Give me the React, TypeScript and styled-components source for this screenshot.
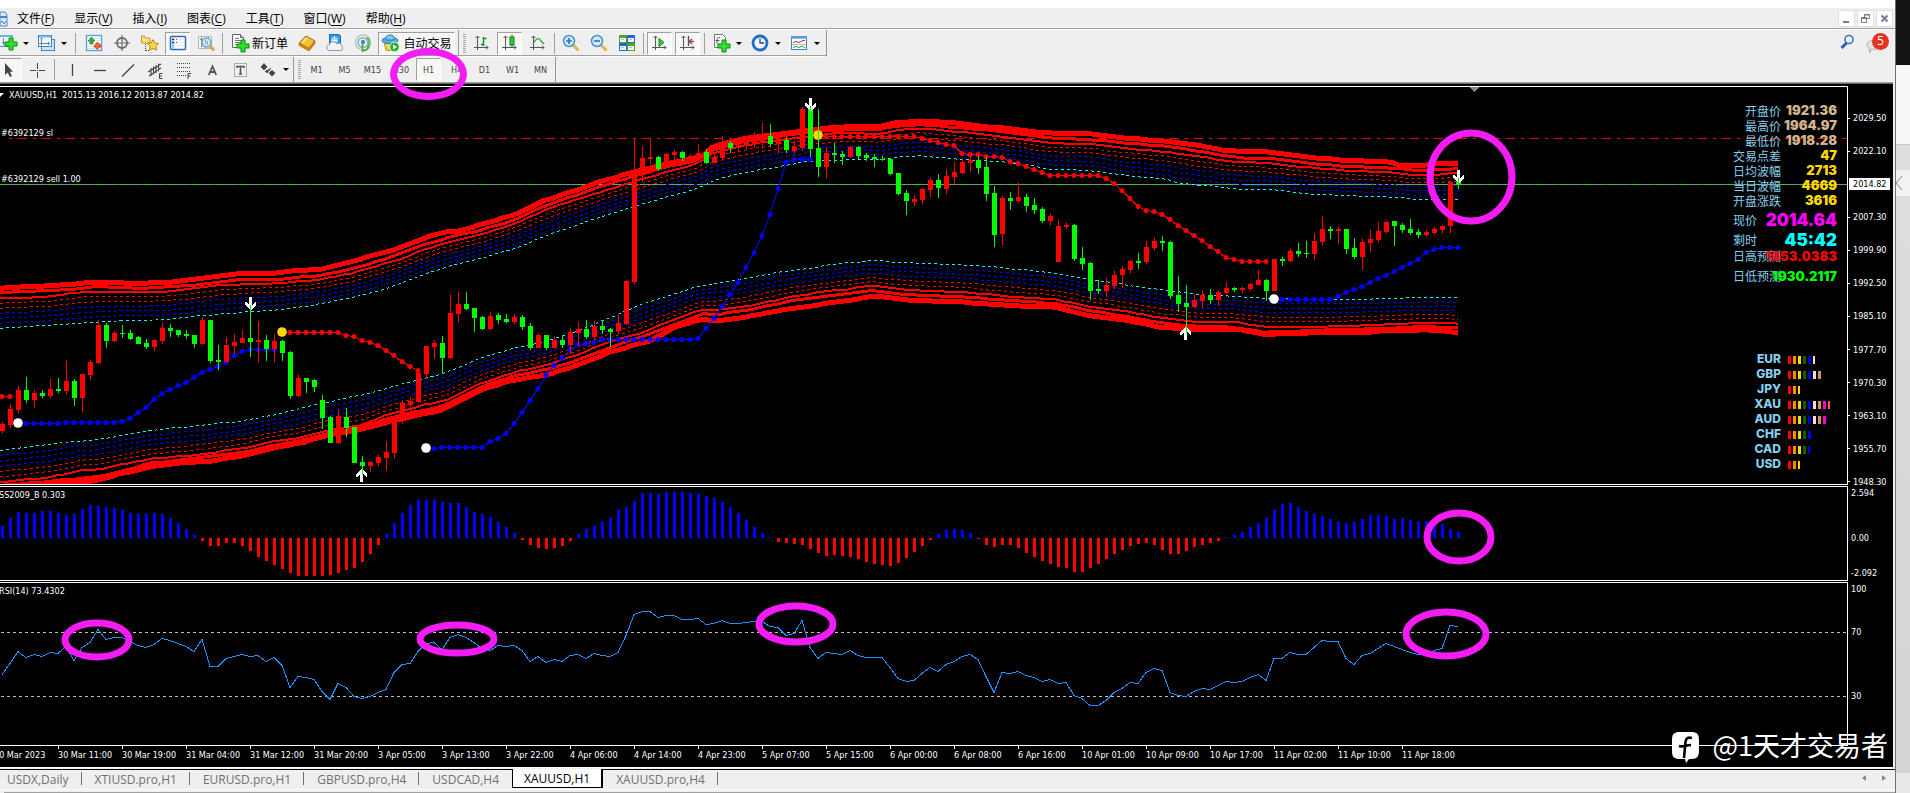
import React from 'react';
import styled, { createGlobalStyle, css } from 'styled-components';

const GlobalStyle = createGlobalStyle`
  * { box-sizing: border-box; }
  body { margin: 0; background: #efefef; overflow: hidden; }
  button { font: inherit; color: inherit; padding: 0; margin: 0; border: 0; background: none; cursor: default; }
`;

const uiFont = `'Open Sans', 'Noto Sans CJK SC', sans-serif`;
const chartFont = `'DejaVu Sans Condensed', 'DejaVu Sans', 'Noto Sans CJK SC', sans-serif`;

/* ------------------------------------------------------------------ frame */

const Screen = styled.div`
  display: flex;
  min-height: 100vh;
  font-family: ${uiFont};
  font-size: 12px;
  color: #000;
`;

const Terminal = styled.div`
  position: relative;
  flex: 1;
  min-width: 0;
  display: flex;
  flex-direction: column;
  background: #efefef;
  border-right: 1px solid #707070;
`;

const Backdrop = styled.aside`
  width: 14px;
  display: flex;
  flex-direction: column;
  background: linear-gradient(#e0e0e0, #d4d4d4);
`;
const BackdropDark = styled.div`height: 65px; background: #141414;`;
const BackdropLight = styled.div`height: 80px; background: #f8f8f8; border-bottom: 1px solid #ccc;`;
const BackdropFoot = styled.div`margin-top: auto; height: 20px; background: #e8e8e8;`;
const CollapseButton = styled.button`
  margin-top: 25px;
  height: 26px;
  background: #f2f2f2;
  text-align: left;
  svg { display: block; }
`;

const TopStrip = styled.div`height: 8px; background: #fff;`;

const MenuBar = styled.nav`
  height: 22px;
  display: flex;
  align-items: center;
  gap: 20px;
  padding-right: 2px;
  border-bottom: 1px solid #fff;
  box-shadow: inset 0 -1px 0 #a0a0a0;
`;
const MenuLogo = styled.span`width: 8px; margin-right: -11px; svg { display: block; }`;
const MenuItem = styled.button`
  font-size: 12px;
  line-height: 18px;
  white-space: nowrap;
  u { text-underline-offset: 2px; }
`;
const WindowButtons = styled.div`margin-left: auto; display: flex; gap: 2px;`;
const WindowButton = styled.button`
  width: 17px;
  height: 17px;
  background: #fff;
  border: 1px solid #e0e0e0;
  svg { display: block; }
`;

const ToolRow = styled.div`display: flex; align-items: flex-start;`;
const Corner = styled.div`
  margin-left: auto;
  display: flex;
  align-items: center;
  gap: 10px;
  height: 27px;
  padding-right: 5px;
`;
const MailButton = styled.button`display: flex; position: relative; width: 25px; height: 22px;`;
const Badge = styled.span`
  position: absolute;
  right: 1px;
  top: 0;
  width: 17px;
  height: 17px;
  border-radius: 50%;
  background: #e23420;
  color: #fff;
  font-size: 12px;
  line-height: 16px;
  text-align: center;
`;

const ToolBar = styled.div<{ $last?: boolean }>`
  display: flex;
  align-items: center;
  height: 27px;
  border-right: 1px solid #999;
  ${p => (p.$last
    ? css`padding-bottom: 2px;`
    : css`padding-right: 2px; border-bottom: 1px solid #fff; box-shadow: inset 0 -1px 0 #a0a0a0;`)}
`;

const Tool = styled.button<{ $on?: boolean; $wide?: number; $gap?: number; $bleed?: boolean }>`
  display: flex;
  align-items: center;
  justify-content: center;
  gap: ${p => p.$gap ?? 2}px;
  width: ${p => p.$wide ?? 25}px;
  height: 23px;
  margin: 0 ${p => (p.$wide ? 1 : 2)}px 0 ${p => (p.$bleed ? -4 : 1)}px;
  border: 1px solid transparent;
  white-space: nowrap;
  svg { flex: none; }
  ${p => p.$on && css`
    border-color: #a0a0a0 #fff #fff #a0a0a0;
    background: repeating-conic-gradient(#fff 0 25%, #f0f0f0 0 50%) 0 0 / 2px 2px;
  `}
`;
const Period = styled(Tool)`
  font-family: ${chartFont};
  font-size: 9px;
  color: #444;
`;
const Rule = styled.i<{ $gap?: number }>`
  width: 1px;
  height: 21px;
  margin: 0 ${p => p.$gap ?? 2}px;
  background: #a0a0a0;
`;
const Grip = styled.i`
  width: 3px;
  height: 19px;
  margin: 0 2px 0 4px;
  background: repeating-linear-gradient(#aaa 0 1px, #efefef 1px 2px);
`;
const Caret = styled.i`
  border: 3px solid transparent;
  border-top-color: #000;
  border-bottom: 0;
`;

/* ------------------------------------------------------------------ chart */

const ChartWindow = styled.main`
  flex: 1;
  display: flex;
  flex-direction: column;
  gap: 1px;
  margin-right: 2px;
  padding-top: 2px;
  background: #000;
  color: #fff;
  font-family: ${chartFont};
  font-size: 9px;
  line-height: 12px;
  box-shadow: 0 -1px 0 #696969, 0 -2px 0 #a0a0a0;
`;
const Pane = styled.section<{ $share: number }>`
  flex: ${p => p.$share} 1 0;
  min-height: 0;
  display: flex;
`;
const Plot = styled.div`
  position: relative;
  flex: 1;
  min-width: 0;
  border: 1px solid #fff;
  border-left: 0;
  overflow: hidden;
`;
const PlotSvg = styled.svg`display: block; width: 100%; height: 100%; position: absolute; inset: 0;`;
const Caption = styled.div<{ $top: string; $left?: number }>`
  position: absolute;
  top: ${p => p.$top};
  left: ${p => p.$left ?? 1}px;
  white-space: pre;
`;
const Axis = styled.ul<{ $top?: number; $bottom?: number }>`
  list-style: none;
  width: 45px;
  margin: 0 0 ${p => p.$bottom ?? 0}px;
  padding: ${p => p.$top ?? 0}px 0 0;
  display: flex;
  flex-direction: column;
  justify-content: space-between;
`;
const Price = styled.li<{ $now?: boolean }>`
  height: 12px;
  display: flex;
  align-items: center;
  gap: 3px;
  &::before { content: ''; width: 2px; height: 1px; background: #fff; }
  span { padding-right: 1px; }
  ${p => p.$now && css`
    color: #000;
    margin-left: 1px;
    margin-right: 3px;
    background: #fff;
    &::before { width: 1px; }
  `}
`;
const Level = styled.li<{ $space?: number }>`
  margin-top: ${p => p.$space ?? 0}px;
  padding-left: 3px;
`;
const LevelAxis = styled(Axis)`justify-content: flex-start;`;

const TimeAxis = styled.ol`
  list-style: none;
  height: 21px;
  margin: -1px 46px 0 -6px;
  padding: 0;
  display: grid;
  grid-template-columns: repeat(28, 64fr) 61fr;
  overflow: hidden;
  li { white-space: nowrap; padding-top: 3px; position: relative; }
  li::before { content: ''; position: absolute; left: 0; top: 0; width: 1px; height: 3px; background: #fff; }
`;

const Quotes = styled.dl`
  position: absolute;
  right: 10px;
  top: 16px;
  margin: 0;
  width: 104px;
`;
const Quote = styled.div<{ $h: number }>`
  display: flex;
  align-items: center;
  height: ${p => p.$h}px;
  dt {
    flex: none;
    width: 48px;
    font: 400 12px/14px 'Noto Sans CJK SC', sans-serif;
    color: #87ceeb;
    white-space: nowrap;
  }
`;
const Amount = styled.dd<{ $color: string; $big?: boolean }>`
  margin: 0;
  flex: 1;
  min-width: 0;
  display: flex;
  justify-content: flex-end;
  font: 900 ${p => (p.$big ? 17 : 13)}px/15px Inter, 'Liberation Sans', sans-serif;
  color: ${p => p.$color};
`;
const RightTerm = styled.dt`text-align: right;`;

const Strengths = styled.ul`
  list-style: none;
  position: absolute;
  right: 10px;
  top: 66.5%;
  width: 80px;
  margin: 0;
  padding: 0;
`;
const Strength = styled.li`
  display: flex;
  align-items: center;
  gap: 2px;
  height: 15px;
  font: 800 12px/15px Inter, 'Liberation Sans', sans-serif;
  color: #87ceeb;
  b { width: 30px; margin: 0 5px 0 -6px; text-align: right; font-weight: inherit; }
`;
const Block = styled.i<{ $color: string; $half?: boolean }>`
  width: ${p => (p.$half ? 2 : 3)}px;
  height: 8px;
  margin-top: 2px;
  background: ${p => p.$color};
`;

const TabBar = styled.footer`
  height: 26px;
  display: flex;
  align-items: flex-start;
  border-top: 1px solid #f8f8f8;
  background: linear-gradient(#000, #000) 0 1px / 100% 1px no-repeat,
    linear-gradient(#a0a0a0, #a0a0a0) 4px 24px / 100% 1px no-repeat,
    linear-gradient(#fff, #fff) 0 21px / 100% 1px no-repeat, #efefef;
`;
const Tab = styled.button<{ $on?: boolean; $beforeOn?: boolean }>`
  height: 19px;
  padding: 0 13px;
  font-size: 12px;
  line-height: 18px;
  color: #707070;
  margin-top: 2px;
  position: relative;
  white-space: nowrap;
  &:first-child { padding-left: 7px; }
  &::after {
    content: '';
    position: absolute;
    right: 0;
    top: 2px;
    width: 1px;
    height: 13px;
    background: ${p => (p.$on || p.$beforeOn ? 'transparent' : '#707070')};
  }
  ${p => p.$on && css`
    color: #000;
    background: #fff;
    margin-top: 1px;
    line-height: 19px;
    border: 1px solid #000;
    border-top: 0;
    border-right-width: 2px;
    padding: 0 11px;
  `}
`;
const TabScroll = styled.div`
  margin: 6px 9px 0 auto;
  display: flex;
  gap: 16px;
  svg { display: block; }
`;

const PeriodMark = styled.div`
  position: absolute;
  left: 390px;
  top: 48px;
  width: 77px;
  height: 52px;
  border: 7px solid #f41cf4;
  border-radius: 50%;
  pointer-events: none;
`;
const Signature = styled.div`
  position: absolute;
  right: 7px;
  bottom: 27px;
  display: flex;
  align-items: center;
  gap: 12px;
  color: #fff;
  font: 400 27px/42px 'Noto Sans CJK SC', sans-serif;
  white-space: nowrap;
  svg { margin-top: 4px; }
`;

/* ------------------------------------------------------------------- data */

const STEP = 8;
const barX = (k: number) => 2 + STEP * k;
/* Series are stored in thirds of a pixel, counted down from the chart origin. */
const pxFrom = (origin: number) => (v: number) => origin + Math.round(v / 3);
const yMain = pxFrom(80);
const ySub = pxFrom(480);

/* colour, high, body top, body bottom, low */
const candles = `r 1025 1032 1053 1060,r 972 987 1035 1044,r 918 930 990 999,g 891 930 960 968,r 930 939 960 984,g 930 939 948 953,r 897 927 948 954,g 894 927 933 939,r 840 903 933 945,g 897 903 954 978,r 882 882 954 996,r 840 846 885 899,r 720 735 849 852,g 729 735 783 804,r 753 759 783 786,g 735 759 762 774,g 750 759 777 780,g 768 771 792 792,g 777 789 801 807,r 780 780 801 812,r 729 744 783 792,g 732 744 753 770,g 750 750 765 770,g 750 762 768 777,g 765 765 792 804,r 711 720 792 792,g 720 720 843 849,g 795 840 846 870,r 771 795 846 846,r 762 786 798 822,r 750 774 789 789,g 675 774 786 831,r 723 780 786 849,g 765 780 807 843,r 762 783 807 849,g 780 783 819 843,g 813 816 948 957,r 885 894 948 951,g 894 894 906 939,g 897 900 921 936,g 945 960 1014 1047,g 1008 1011 1089 1089,r 990 1008 1089 1092,g 984 1011 1044 1071,g 1041 1041 1149 1149,g 1128 1146 1158 1185,r 1143 1146 1158 1176,r 1125 1131 1149 1161,r 1083 1116 1134 1173,r 1010 1020 1119 1137,r 960 969 1020 1032,r 951 963 975 993,r 870 879 966 969,r 798 798 882 897,r 780 789 801 837,g 768 789 834 882,r 645 699 834 837,r 636 672 702 729,g 636 672 687 690,g 684 684 714 756,g 708 711 747 750,r 696 708 747 750,g 699 705 720 732,g 702 717 726 729,r 702 711 726 732,g 705 711 741 750,g 729 738 804 810,r 759 765 804 804,g 765 765 804 810,r 768 780 804 807,g 765 780 795 804,r 744 756 795 822,r 726 747 759 798,g 720 747 771 777,r 723 738 771 777,g 720 738 750 762,g 744 747 756 801,r 702 729 753 765,r 600 603 732 735,r 174 270 606 612,r 198 234 285 306,r 174 231 237 252,g 228 231 267 273,r 219 222 264 264,r 207 216 225 246,g 213 216 234 243,r 222 228 240 243,r 192 219 234 240,g 207 216 249 252,r 219 231 249 249,r 168 189 234 240,g 183 189 204 219,r 189 195 204 216,r 174 183 198 207,r 156 180 189 204,r 129 165 183 204,g 132 168 192 201,r 168 180 192 219,g 171 180 210 219,r 180 201 213 222,r 81 87 204 213,g 75 87 207 231,g 87 204 261 291,r 201 219 261 297,g 189 219 225 249,g 213 222 231 255,r 198 201 231 234,g 198 201 228 237,g 219 225 234 243,g 222 231 237 261,g 228 237 240 243,g 234 237 282 285,g 279 279 342 345,g 330 339 363 405,r 345 357 366 378,r 324 327 360 372,r 294 300 330 351,g 282 300 324 354,r 267 288 327 342,r 246 276 291 312,r 234 246 279 282,r 228 240 249 276,g 228 240 264 282,g 231 261 342 363,g 318 339 465 501,r 348 354 462 495,g 336 354 363 390,r 309 351 363 369,g 342 351 378 396,g 354 375 390 402,g 381 387 423 429,r 399 408 423 435,r 420 438 546 546,r 429 435 441 447,g 432 435 537 543,g 501 534 552 570,g 546 549 633 660,g 600 627 633 642,r 594 615 633 651,r 573 585 618 627,r 558 567 585 624,r 540 543 570 579,g 519 543 549 567,r 483 501 546 552,r 471 483 504 513,g 468 483 489 513,g 483 486 648 657,g 588 645 672 696,g 615 669 681 750,r 642 660 681 684,r 630 645 663 684,g 627 645 660 672,r 630 636 660 678,r 606 624 639 642,g 621 624 630 636,r 621 624 630 639,r 609 612 627 633,r 570 600 615 615,g 597 600 633 663,r 537 537 633 633,g 531 537 543 558,r 507 513 543 546,g 489 513 522 531,g 483 519 522 534,r 459 483 522 540,r 408 447 486 495,g 438 447 453 477,r 441 447 453 492,g 447 447 507 522,g 474 504 531 537,r 477 486 531 570,r 447 477 489 516,r 426 453 480 489,r 423 426 456 459,g 423 423 438 498,g 429 435 450 459,g 417 447 459 465,g 447 456 465 474,r 450 456 465 471,r 441 447 459 465,r 435 438 450 459,r 306 306 438 459,g 294 306 315 327`
  .split(',')
  .map(row => {
    const [c, ...v] = row.split(' ');
    const [high, top, bottom, low] = v.map(n => yMain(Number(n)));
    return { color: c === 'r' ? '#f00' : '#0f0', high, top, bottom, low };
  });

const list = (s: string) => s.split(' ').map(Number);

const histogram = list('138 114 96 99 99 93 93 99 105 102 87 75 78 81 84 90 99 102 102 99 102 114 129 147 165 183 198 198 189 189 198 213 231 243 255 267 279 288 288 288 288 285 279 270 264 246 222 195 162 129 99 75 60 60 60 66 69 69 81 96 102 111 126 141 159 180 195 204 207 204 198 183 162 147 138 126 114 90 81 63 39 39 42 36 36 36 39 42 48 54 66 81 99 120 141 159 171 186 189 192 195 207 219 228 225 228 231 237 246 252 255 258 249 234 216 198 180 162 150 147 150 159 177 195 201 195 195 204 219 231 243 252 261 264 276 276 264 252 237 222 210 198 192 189 195 210 222 222 213 201 195 189 183 171 165 156 141 129 114 90 72 69 81 93 102 108 117 126 129 126 117 105 105 108 117 114 120 126 123 129 132 147 156');

const rsi = list('583 549 514 531 523 529 517 520 497 541 502 487 448 478 472 472 483 494 502 493 475 481 490 497 514 478 559 559 535 528 523 528 526 543 532 556 622 589 592 598 632 657 610 622 649 653 649 637 628 577 553 548 514 490 487 508 472 462 472 487 505 510 495 499 496 511 544 529 547 538 544 526 523 535 520 526 529 516 464 401 394 394 411 406 406 418 418 415 433 430 421 430 430 427 424 424 439 440 466 460 421 502 535 517 520 523 511 526 532 532 532 562 595 604 601 580 562 574 553 544 527 523 538 589 637 577 580 574 586 590 604 598 610 607 646 653 674 674 661 637 625 607 610 577 565 569 637 646 649 634 625 628 614 604 607 604 592 583 601 535 535 517 523 523 502 481 484 484 535 553 526 519 505 490 499 508 517 523 520 511 504 436 439');

type Point = [number, number];
const curve = (s: string): Point[] => s.split(' ').map(p => p.split(':').map(Number) as Point);

const upper = [
  curve('0:623 60:614 100:604 140:609 180:603 200:594 240:580 275:578 290:571 320:567 350:546 375:523 400:502 425:472 445:455 460:451 480:433 515:403 540:365 555:350 580:325 608:296 640:270 660:254 700:229 705:225 712:200 725:187 745:172 780:160 820:145 845:139 880:137 895:127 920:122 945:125 960:130 1000:142 1050:158 1090:160 1125:172 1165:182 1200:196 1225:210 1270:215 1310:230 1350:240 1390:245 1400:255 1425:255 1430:250 1458:250'),
  curve('0:636 60:629 100:618 140:624 180:617 205:610 240:598 280:596 320:585 350:567 375:545 400:520 425:492 445:474 480:449 515:418 540:382 555:366 580:340 608:311 640:282 660:264 700:238 712:210 745:182 780:168 820:152 845:148 880:147 895:138 920:132 960:142 1000:152 1050:172 1090:177 1125:187 1165:197 1200:212 1225:227 1250:235 1268:232 1310:248 1350:258 1395:263 1415:271 1440:267 1458:265'),
  curve('0:653 50:648 75:636 100:632 145:635 180:630 220:613 280:607 320:597 350:580 400:536 425:507 445:487 480:463 515:430 540:395 555:378 608:327 640:298 660:280 700:247 712:218 745:195 780:177 820:163 845:156 880:159 900:148 920:143 945:150 960:154 1000:168 1050:187 1090:190 1125:203 1165:213 1200:228 1225:241 1260:246 1310:261 1350:270 1390:275 1405:281 1440:281 1445:278 1458:276'),
];
const upperMid = curve('0:744 60:732 85:727 120:720 165:718 200:706 275:688 310:676 345:656 375:635 400:610 425:580 460:548 480:534 515:503 550:462 580:430 605:405 640:373 660:355 700:322 715:297 745:276 780:258 805:243 845:238 880:236 895:231 920:226 945:232 960:236 990:242 1020:249 1050:267 1090:269 1125:285 1165:296 1180:308 1225:321 1245:328 1275:328 1310:341 1350:346 1395:350 1415:356 1458:356');
const lower = [
  curve('0:1225 60:1210 100:1198 120:1180 150:1160 180:1148 210:1142 250:1122 270:1105 300:1088 330:1063 360:1048 395:1019 440:990 460:960 480:930 510:900 550:882 580:850 610:815 650:780 675:740 700:717 715:722 745:710 790:685 820:672 850:660 870:648 890:650 910:660 960:664 1010:675 1055:680 1090:705 1130:722 1160:740 1200:747 1240:748 1265:762 1310:757 1360:757 1390:750 1430:748 1458:755'),
  curve('0:1215 50:1202 100:1188 125:1170 150:1148 200:1132 250:1112 270:1097 300:1080 330:1056 360:1040 400:1004 445:975 480:920 515:885 550:865 580:837 608:803 640:770 670:738 705:697 715:703 750:688 790:662 820:650 850:638 875:630 900:640 920:645 960:648 1000:658 1055:669 1090:690 1120:705 1160:727 1200:738 1235:740 1265:755 1330:748 1390:743 1420:738 1458:742'),
  curve('0:1205 50:1190 80:1170 100:1165 150:1135 200:1122 250:1100 270:1083 300:1072 330:1047 360:1035 385:1005 400:993 425:972 445:960 480:910 515:875 550:850 580:820 608:785 640:758 670:723 700:687 715:690 750:675 790:650 820:635 850:625 870:615 895:625 920:630 960:633 1000:645 1055:657 1090:678 1120:690 1160:712 1200:725 1230:723 1265:738 1310:738 1370:733 1410:728 1440:725 1458:730'),
];
const lowerMid = curve('0:1110 35:1098 75:1083 100:1076 150:1050 200:1035 240:1022 280:1000 320:970 340:957 375:935 400:912 425:893 445:878 480:833 515:802 550:780 580:748 605:718 640:672 665:650 700:615 715:610 750:592 780:573 820:558 850:546 875:540 900:546 960:553 990:558 1020:567 1060:579 1090:598 1120:610 1155:626 1200:643 1240:648 1275:655 1340:657 1380:655 1405:652 1458:652');

const valueAt = (pts: Point[], x: number) => {
  for (let i = 1; i < pts.length; i++) {
    if (x <= pts[i][0]) {
      const [x0, y0] = pts[i - 1];
      const [x1, y1] = pts[i];
      return y0 + ((y1 - y0) * (x - x0)) / (x1 - x0);
    }
  }
  return pts[pts.length - 1][1];
};
const line = (fn: (x: number) => number) =>
  Array.from({ length: 184 }, (_, i) => Math.min(1458, i * STEP))
    .map(x => `${x},${yMain(fn(x)) + 0.5}`)
    .join(' ');
const bands = [
  { edges: upper.map((pts, i) => ({ pts, width: [5, 3, 2][i] })), inner: upper[2], mid: upperMid },
  { edges: lower.map((pts, i) => ({ pts, width: [5, 3, 2][i] })), inner: lower[2], mid: lowerMid },
];
const dashColors = ['#f00', '#f00', '#00f', '#00f', '#00f'];

/* first bar, colour, colour of the starting marker, levels ("v*n" repeats a level) */
const trails = [
  { from: 0, color: '#f00', start: '', v: '949*2' },
  { from: 2, color: '#00f', start: '#fff', v: '1030*6 1027*7 1024 1015 997 980 958 940 926 916 905 892 877 868 858 847 826 814 808*4' },
  { from: 35, color: '#f00', start: '#ffd700', v: '757*8 766 769 781 787 796 811 826 844 859 871' },
  { from: 53, color: '#00f', start: '#fff', v: '1105*2 1102*6 1084 1075 1060 1030 997 961 925 886 856 835 808 793 790 787 778*12 775 745 715 679 643 607 562 517 466 403 325 247 238*3' },
  { from: 102, color: '#f00', start: '#ffd700', v: '166 169*12 175 181 187 193 196 220 223*2 229*2 232 244 250 259 268 277 284*6 286 295 310 331 355 379 391 394 403 418 436 451 466 481 499 514 532 538 544*4' },
  { from: 159, color: '#00f', start: '#fff', v: '658*8 649 637 628 619 607 595 586 574 562 550 538 517 508 502*3' },
].map(t => ({
  ...t,
  points: t.v
    .split(' ')
    .flatMap(s => {
      const [level, n = '1'] = s.split('*');
      return Array(Number(n)).fill(yMain(Number(level))) as number[];
    })
    .map((y, i) => [barX(t.from + i), y] as Point),
}));

const times = ['30 Mar 2023', '30 Mar 11:00', '30 Mar 19:00', '31 Mar 04:00', '31 Mar 12:00', '31 Mar 20:00', '3 Apr 05:00', '3 Apr 13:00', '3 Apr 22:00', '4 Apr 06:00', '4 Apr 14:00', '4 Apr 23:00', '5 Apr 07:00', '5 Apr 15:00', '6 Apr 00:00', '6 Apr 08:00', '6 Apr 16:00', '10 Apr 01:00', '10 Apr 09:00', '10 Apr 17:00', '11 Apr 02:00', '11 Apr 10:00', '11 Apr 18:00'];
const prices = ['2029.50', '2022.10', '2014.82', '2007.30', '1999.90', '1992.50', '1985.10', '1977.70', '1970.30', '1963.10', '1955.70', '1948.30'];

const quotes = [
  { label: '开盘价', value: '1921.36', color: '#d2b48c', h: 15, right: true },
  { label: '最高价', value: '1964.97', color: '#d2b48c', h: 15, right: true },
  { label: '最低价', value: '1918.28', color: '#d2b48c', h: 15, right: true },
  { label: '交易点差', value: '47', color: '#ffd700', h: 15 },
  { label: '日均波幅', value: '2713', color: '#ffd700', h: 15 },
  { label: '当日波幅', value: '4669', color: '#ffd700', h: 15 },
  { label: '开盘涨跌', value: '3616', color: '#ffd700', h: 15 },
  { label: '现价', value: '2014.64', color: '#f0f', h: 24, big: true },
  { label: '剩时', value: '45:42', color: '#0ff', h: 16, big: true },
  { label: '日高预测', value: '1953.0383', color: '#f00', h: 16 },
  { label: '日低预测', value: '1930.2117', color: '#0f0', h: 24 },
];
const blockColors = ['#f00', '#ff8c00', '#ffd700', '#006400', '#0000e0', '#ffdcc8', '#d2906a', '#ff00d0', '#ff6040'];
const strengths = [
  { name: 'EUR', n: 6, half: true },
  { name: 'GBP', n: 7 },
  { name: 'JPY', n: 3, half: true },
  { name: 'XAU', n: 9, half: true },
  { name: 'AUD', n: 8 },
  { name: 'CHF', n: 5 },
  { name: 'CAD', n: 5, half: true },
  { name: 'USD', n: 3, half: true },
];
const menus = [['文件', 'F'], ['显示', 'V'], ['插入', 'I'], ['图表', 'C'], ['工具', 'T'], ['窗口', 'W'], ['帮助', 'H']];
const tabs = ['USDX,Daily', 'XTIUSD.pro,H1', 'EURUSD.pro,H1', 'GBPUSD.pro,H4', 'USDCAD,H4', 'XAUUSD,H1', 'XAUUSD.pro,H4'];
const ACTIVE_TAB = 5;

/* ------------------------------------------------------------------ icons */

const plus = (x: number, y: number) => (
  <path d={`M${x + 4} ${y}h4v4h4v4h-4v4h-4v-4h-4v-4h4z`} fill="#2fe02f" stroke="#0a8a12" />
);
const axes = <path d="M5.500 3v14M2 14.500h14M3.500 5l2-2 2 2M14 12.500l2 2-2 2" fill="none" stroke="#555" />;

const icons: Record<string, React.ReactNode> = {
  newChart: (<><rect x="1.500" y="2.500" width="13" height="11" fill="#eaf4fd" stroke="#4a8abf" /><path d="M1 3h14" stroke="#6aaede" strokeWidth="2" /><path d="M5.500 5v7M4 9.500h9" stroke="#5a8ab0" />{plus(7, 5)}</>),
  profiles: (<><rect x="5.500" y="6.500" width="13" height="11" fill="#cfe6f8" stroke="#3f83bd" /><rect x="2.500" y="2.500" width="13" height="11" fill="#f2f9ff" stroke="#3f83bd" /><path d="M3 3.500h12" stroke="#7ab4e4" strokeWidth="2" /><path d="M5.500 5v7M3.500 10.500h10M4.500 6l1-1 1 1M12 9l1.500 1.500L12 12" fill="none" stroke="#5585ad" /></>),
  market: (<><rect x="2.500" y="2.500" width="15" height="15" fill="#fff" stroke="#5aa0dc" strokeWidth="1.400" /><path d="M10 5.500h6M4 15.500h7M4 13.500h6M12 7.500h4" stroke="#d4e6f5" /><path d="M7.500 4l3.500 4H9v3H6V8H4z" fill="#2fb52f" stroke="#187a18" strokeWidth=".7" /><path d="M13 16.500L9.500 13h2v-1h-1l3-3 3 3h-1v1h2z" fill="#f0632f" stroke="#b53812" strokeWidth=".7" /></>),
  cross: (<><circle cx="10" cy="10" r="5" fill="none" stroke="#6a6a6a" strokeWidth="1.800" /><path d="M10 2v16M2 10h16" stroke="#6a6a6a" strokeWidth="1.200" /></>),
  navigator: (<><path d="M1.500 3h3l1 2h4.500v5h-8.500z" fill="#f8e08c" stroke="#c49a2c" /><path d="M5.500 11v7M6 17.500h4" stroke="#444" strokeDasharray="1 1" /><path d="M13 6.500l1.800 3.400 3.900.7-2.800 2.700.6 3.900-3.500-1.800-3.500 1.800.6-3.900-2.800-2.700 3.900-.7z" fill="#fbd84a" stroke="#c08a10" /></>),
  terminal: (<><rect x="2.500" y="3.500" width="15" height="13" fill="#fff" stroke="#2a6db5" strokeWidth="1.500" rx="1" /><path d="M5 4v12" stroke="#a9cdf0" strokeWidth="3" /><path d="M4 6.500h2M4 9.500h2" stroke="#222" /><path d="M8 6.500h1M8 9.500h1" stroke="#d22" /><path d="M9 12.500h7M10 9.500h6M10 6.500h6" stroke="#e2ecf6" /></>),
  tester: (<><path d="M2.500 3.500h13v12h-13z" fill="#f6f6ee" stroke="#b8b8a8" /><path d="M5.500 4v10M4 6.500h3M12.500 4v9" stroke="#7b8d9a" /><circle cx="10.500" cy="9.500" r="4.500" fill="#cfe8f8" stroke="#6fa4d2" strokeWidth="1.500" /><path d="M9.500 7v4M11.500 8v4" stroke="#7fa6c8" /><path d="M14 13l4 4.500" stroke="#d6a93a" strokeWidth="2.800" /></>),
  order: (<><path d="M2.500 1.500h8l3 3v10h-11z" fill="#fff" stroke="#666" /><path d="M10.500 1.500v3h3" fill="#ccc" stroke="#666" /><path d="M5 5.500h4M5 7.500h6M5 9.500h6M5 11.500h4" stroke="#777" />{plus(7, 7)}</>),
  book: (<><path d="M2 10l7-7 9 5-6 9z" fill="#f2bf3a" stroke="#a5690e" /><path d="M2 10l10 5 6-7v2.500L12 18 2 12.500z" fill="#c98916" stroke="#a5690e" strokeWidth=".6" /><path d="M5.500 9.500l4.500-4.500" stroke="#ffe79a" strokeWidth="1.500" /></>),
  publish: (<><path d="M4.500 1.500h9l2 1v8h-11z" fill="#2e9be8" stroke="#1b6db8" /><path d="M6.500 4.500h6v5h-6z" fill="#a8dcfa" /><path d="M6.500 7.500h6M9.500 3v2" stroke="#fff" /><path d="M4 17.500a3.200 3.200 0 01.5-6.200 4 4 0 017.300-.6 3.300 3.300 0 015 3 2.200 2.200 0 01-.8 3.800z" fill="#f0f4fa" stroke="#8a9cb8" /></>),
  signal: (<g fill="none"><circle cx="10" cy="9.500" r="7.500" stroke="#b4c6cc" strokeWidth="1.600" /><circle cx="10" cy="9.500" r="4.800" stroke="#7fb4a8" strokeWidth="1.500" /><path d="M14 4.500a6.500 6.500 0 010 10" stroke="#58b84c" strokeWidth="1.800" /><circle cx="10" cy="9" r="2.200" fill="#4489d8" /><path d="M9.500 11v7c3-.3 5.500-2 6.500-4.500" stroke="#46a13c" strokeWidth="1.600" /></g>),
  robot: (<><path d="M3 9l2 8 8 1 3-9z" fill="#f4d24a" stroke="#b98a1a" /><ellipse cx="9" cy="7.500" rx="8" ry="3.200" fill="#52aee4" stroke="#2a78b0" /><path d="M4.500 6c0-5.500 9-5.500 9 0 0 1.500-9 1.500-9 0z" fill="#7cc6f0" stroke="#2a78b0" /><circle cx="13.500" cy="14" r="4.800" fill="#22b02c" stroke="#fff" strokeWidth=".8" /><path d="M12 11.500v5l4-2.500z" fill="#fff" /></>),
  bars: (<>{axes}<path d="M11.500 4v9M11.500 5.500h3M9 11.500h2.500" stroke="#0a8f1a" strokeWidth="1.400" /></>),
  candle: (<>{axes}<path d="M12 1.500v13" stroke="#0a7a18" /><rect x="10" y="4" width="4" height="8" fill="#2fd03a" stroke="#0a7a18" /></>),
  lineChart: (<>{axes}<path d="M5 11c3-6 6-7 8-3l3 3" fill="none" stroke="#2ba03a" strokeWidth="1.300" /></>),
  zoomIn: (<><path d="M11.500 11.500l6 6" stroke="#e0b93e" strokeWidth="3" /><circle cx="8" cy="8" r="5.500" fill="#d5ebfb" stroke="#4b90d0" strokeWidth="1.500" /><path d="M5 8h6M8 5v6" stroke="#2a75b8" strokeWidth="1.600" /></>),
  zoomOut: (<><path d="M11.500 11.500l6 6" stroke="#e0b93e" strokeWidth="3" /><circle cx="8" cy="8" r="5.500" fill="#d5ebfb" stroke="#4b90d0" strokeWidth="1.500" /><path d="M5 8h6" stroke="#2a75b8" strokeWidth="1.600" /></>),
  tiles: (<><path d="M2 2h8v8H2zM10 10h8v8h-8z" fill="#54a61c" /><path d="M10 2h8v8h-8zM2 10h8v8H2z" fill="#2a63d8" /><path d="M3 5h6v4H3zM11 5h6v4h-6zM3 13h6v4H3zM11 13h6v4h-6z" fill="#f2f8ff" /><path d="M4 6.500h3M12 6.500h3M4 14.500h3M12 14.500h3" stroke="#9dc0e8" /></>),
  scroll: (<>{axes}<path d="M9 5.500v8l5-4z" fill="#37cf43" stroke="#0a8a18" /></>),
  shift: (<>{axes}<path d="M10.500 3v10" stroke="#1c5fa8" strokeWidth="1.400" /><path d="M16 8.500h-4M14 6l-3 2.500 3 2.500" stroke="#b8401a" strokeWidth="1.300" fill="none" /></>),
  indicators: (<><path d="M3.500 1.500h8l3 3v10h-11z" fill="#fff" stroke="#777" /><path d="M6 11V6.500c0-2 2-2.500 3-1.500M4.500 7.500h4" stroke="#555" fill="none" />{plus(7, 7)}</>),
  clock: (<><circle cx="10" cy="10" r="7" fill="#eef6ff" stroke="#1f6fc6" strokeWidth="2.800" /><path d="M10 5.500V10h4" stroke="#444" strokeWidth="1.300" fill="none" /></>),
  template: (<><rect x="2.500" y="3.500" width="15" height="13" fill="#fff" stroke="#3f83bd" /><path d="M2 4.500h16" stroke="#5f9fdc" strokeWidth="2.500" /><path d="M4 9.500l3-1 3 1 4-2h2" stroke="#b03a1c" fill="none" /><path d="M3 11.500h14" stroke="#9cc3e6" /><path d="M4 14.500l3-1 3 1 3-1.500 3 2" stroke="#2b9a3a" fill="none" /></>),
  pointer: <path d="M6 3v12l2.600-2.400L11 17l2-1-2.300-4.300H14z" fill="#444" />,
  crossThin: <path d="M10.500 3v6M10.500 12v6M3 10.500h6M12 10.500h6M10 10.500h1" stroke="#444" />,
  vline: <path d="M10.500 4v12" stroke="#444" strokeWidth="1.300" />,
  hline: <path d="M4 10.500h12" stroke="#444" strokeWidth="1.300" />,
  trend: <path d="M4 16.500L16 4.500" stroke="#444" strokeWidth="1.200" />,
  channel: (<><path d="M2 12L15 4M3 16L15 8M5 8v8M7.500 6.500v8M10 5v8M12.500 3.500v8" stroke="#444" strokeWidth="1.100" /><path d="M16.500 13.500h-3v5h3M13.500 16h2.500" fill="none" stroke="#444" /></>),
  fibo: (<><path d="M3 3.500h13M3 7.500h13M3 11.500h13M3 15.500h9" stroke="#444" strokeDasharray="1 1" /><path d="M17 13.500h-3v5.500M14 16h2.500" fill="none" stroke="#444" /></>),
  letter: <path d="M6.800 15L10.500 6.200 14.200 15M8 12h5" fill="none" stroke="#555" strokeWidth="1.800" />,
  label: (<><rect x="4.500" y="3.500" width="12" height="13" fill="none" stroke="#666" strokeDasharray="1 1" /><path d="M7 8V6.500h7V8M10.500 6v8M9 14h3" fill="none" stroke="#555" strokeWidth="1.600" /></>),
  shapes: (<><path d="M6 3.500l3 3.500-3 3-3-3zM7 11l2 2 4-5" fill="#444" stroke="#444" strokeWidth=".8" /><path d="M14 10l3.500 3-3.500 3.500-3.500-3.500z" fill="#444" /></>),
};

const Icon = ({ name }: { name: string }) => (
  <svg width="20" height="20" viewBox="0 0 20 20" aria-hidden="true">{icons[name]}</svg>
);
const IconTool = ({ name, on, menu }: { name: string; on?: boolean; menu?: boolean }) => (
  <Tool aria-label={name} $on={on} $wide={menu ? 37 : undefined} $gap={5}>
    <Icon name={name} />
    {menu && <Caret />}
  </Tool>
);

/* ------------------------------------------------------------- components */

const Ring = styled.ellipse`
  fill: none;
  stroke: #f41cf4;
  stroke-width: 7px;
  shape-rendering: auto;
`;

const Signal = ({ x, y, up }: { x: number; y: number; up?: boolean }) => (
  <path
    transform={`translate(${x} ${y}) scale(1 ${up ? -1 : 1})`}
    d="M-1 -7h3v8l3 -3h1v3l-5 5h-1l-5 -5v-3h1l3 3z"
    fill="#fff"
  />
);

const MainPlot = () => (
  <PlotSvg viewBox="0 87 1847 397" preserveAspectRatio="none" shapeRendering="crispEdges">
    <path d="M0 184.500h1847" stroke="#778899" />
    <path d="M0 184.500h1847" stroke="#32cd32" strokeDasharray="9 6 3 6" />
    <path d="M3 138.500h1844" stroke="#f00" strokeDasharray="9 6 3 6" strokeDashoffset="9" />
    {bands.map(({ edges, inner, mid }, side) => (
      <g key={side} fill="none">
        {dashColors.map((c, i) => (
          <polyline
            key={i}
            stroke={c}
            strokeDasharray="3 3"
            points={line(x => valueAt(inner, x) + ((valueAt(mid, x) - valueAt(inner, x)) * (i + 1)) / 6)}
          />
        ))}
        <polyline stroke="#0ff" strokeDasharray="3 3" points={line(x => valueAt(mid, x))} />
        {edges.map(({ pts, width }) => (
          <polyline key={width} stroke="#f00" strokeWidth={width} points={line(x => valueAt(pts, x))} />
        ))}
      </g>
    ))}
    {trails.map(t => (
      <g key={t.from} fill={t.color}>
        <polyline points={t.points.map(([x, y]) => `${x},${y + 0.5}`).join(' ')} fill="none" stroke={t.color} />
        {t.points.map(([x, y], i) =>
          i === 0 && t.start ? (
            <circle key={x} cx={x} cy={y} r="4.800" fill={t.start} shapeRendering="auto" />
          ) : (
            <circle key={x} cx={x} cy={y + 0.5} r="2.500" shapeRendering="auto" />
          ),
        )}
      </g>
    ))}
    {candles.map((c, k) => (
      <g key={k} fill={c.color}>
        <rect x={barX(k)} y={c.high} width="1" height={Math.max(1, c.low - c.high)} />
        <rect x={barX(k) - 2} y={c.top} width="5" height={Math.max(1, c.bottom - c.top)} />
      </g>
    ))}
    <Signal x={250} y={304} />
    <Signal x={810} y={105} />
    <Signal x={1458} y={177} />
    <Signal x={361} y={475} up />
    <Signal x={1185} y={333} up />
    <path d="M250.500 305v13M810.500 106v12M1458.500 178v8M1186.500 325v8M362.500 468v7" stroke="#0f0" />
    <path d="M1470 87h9l-4.500 5z" fill="#778899" />
    <Ring cx="1471" cy="177" rx="41" ry="44" />
  </PlotSvg>
);

const HistogramPlot = () => (
  <PlotSvg viewBox="0 487 1847 93" preserveAspectRatio="none" shapeRendering="crispEdges">
    {histogram.map((v, k) => {
      const y = ySub(v);
      return (
        <rect key={k} x={barX(k) - 1} y={Math.min(y, 538)} width="3" height={Math.max(1, Math.abs(538 - y))} fill={y < 538 ? '#00f' : '#f00'} />
      );
    })}
    <Ring cx="1459" cy="537" rx="32" ry="24" />
  </PlotSvg>
);

const rings = [[97, 640, 32, 17], [457, 639, 37, 14], [796, 624, 37, 18], [1446, 634, 40, 22]];
const RsiPlot = () => (
  <PlotSvg viewBox="0 583 1847 162" preserveAspectRatio="none" shapeRendering="crispEdges">
    <path d="M1 632.500h1846M1 696.500h1846" stroke="#c0c0c0" strokeDasharray="3 3" />
    <polyline points={rsi.map((v, k) => `${barX(k)},${ySub(v) + 0.5}`).join(' ')} fill="none" stroke="#1e90ff" />
    {rings.map(([cx, cy, rx, ry]) => (
      <Ring key={cx} cx={cx} cy={cy} rx={rx} ry={ry} />
    ))}
  </PlotSvg>
);

export default function App() {
  return (
    <Screen>
      <GlobalStyle />
      <Terminal>
        <TopStrip />
        <MenuBar>
          <MenuLogo>
            <svg width="8" height="16" viewBox="0 0 8 16"><path d="M0 1h5l2 3v11H0z" fill="#d8e8fa" stroke="#4a86d0" /><path d="M0 6h7" stroke="#4a86d0" strokeWidth="2" /><path d="M0 12l2-2 2 3 2-3" fill="none" stroke="#4a86d0" /></svg>
          </MenuLogo>
          {menus.map(([name, key]) => (
            <MenuItem key={key}>{name}(<u>{key}</u>)</MenuItem>
          ))}
          <WindowButtons>
            <WindowButton aria-label="最小化"><svg width="15" height="15"><path d="M4 11h6" stroke="#6f7f90" strokeWidth="2" /></svg></WindowButton>
            <WindowButton aria-label="还原"><svg width="15" height="15" fill="none" stroke="#6f7f90"><path d="M6.500 6V3.500h5v4H9M6 4h6M3.500 6.500h5v5h-5zM3 7.500h6" /></svg></WindowButton>
            <WindowButton aria-label="关闭"><svg width="15" height="15"><path d="M4.500 4.500l6 6M10.500 4.500l-6 6" stroke="#6f7f90" strokeWidth="2" /></svg></WindowButton>
          </WindowButtons>
        </MenuBar>

        <ToolRow>
          <ToolBar>
            <Tool aria-label="newChart" $wide={35} $gap={5} $bleed><Icon name="newChart" /><Caret /></Tool>
            <IconTool name="profiles" menu />
            <Rule $gap={4} />
            <IconTool name="market" />
            <IconTool name="cross" />
            <IconTool name="navigator" />
            <IconTool name="terminal" on />
            <IconTool name="tester" />
            <Rule />
            <Tool $wide={66}><Icon name="order" />新订单</Tool>
            <IconTool name="book" />
            <IconTool name="publish" />
            <IconTool name="signal" />
            <Tool $wide={77} $on><Icon name="robot" />自动交易</Tool>
          </ToolBar>
          <ToolBar>
            <Grip />
            <IconTool name="bars" />
            <IconTool name="candle" on />
            <IconTool name="lineChart" />
            <Rule />
            <IconTool name="zoomIn" />
            <IconTool name="zoomOut" />
            <IconTool name="tiles" />
            <Rule />
            <IconTool name="scroll" on />
            <IconTool name="shift" on />
            <Rule />
            <IconTool name="indicators" menu />
            <IconTool name="clock" menu />
            <IconTool name="template" menu />
          </ToolBar>
          <Corner>
            <button aria-label="搜索">
              <svg width="16" height="16" viewBox="0 0 16 16"><path d="M8 8.500l-5.500 5.500" stroke="#2a5fc0" strokeWidth="3" /><circle cx="10" cy="5.500" r="4" fill="#f2f7ff" stroke="#3a70d0" strokeWidth="1.600" /></svg>
            </button>
            <MailButton aria-label="消息 5">
              <svg width="18" height="22" viewBox="0 0 18 22"><path d="M2 12c0-6 12-6 12 0 0 4-4 5-8 4l-1 4-1-5c-1-.5-2-1.500-2-3z" fill="#e4e4ea" stroke="#b0b0b8" /></svg>
              <Badge>5</Badge>
            </MailButton>
          </Corner>
        </ToolRow>

        <ToolRow>
          <ToolBar $last>
            <Tool aria-label="pointer" $wide={26} $bleed $on><Icon name="pointer" /></Tool>
            <IconTool name="crossThin" />
            <Rule $gap={3} />
            <IconTool name="vline" />
            <IconTool name="hline" />
            <IconTool name="trend" />
            <IconTool name="channel" />
            <IconTool name="fibo" />
            <IconTool name="letter" />
            <IconTool name="label" />
            <IconTool name="shapes" menu />
          </ToolBar>
          <ToolBar $last>
            <Grip />
            {['M1', 'M5', 'M15', 'M30', 'H1', 'H4', 'D1', 'W1', 'MN'].map(p => (
              <Period key={p} $on={p === 'H1'}>{p}</Period>
            ))}
          </ToolBar>
        </ToolRow>

        <ChartWindow>
          <Pane $share={399}>
            <Plot>
              <MainPlot />
              <Caption $top="2px" $left={9}>XAUUSD,H1  2015.13 2016.12 2013.87 2014.82</Caption>
              <Caption $top="2px" $left={0}>
                <svg width="5" height="12" viewBox="0 0 5 12"><path d="M-4 4h8L0 8z" fill="#fff" /></svg>
              </Caption>
              <Caption $top="10%">#6392129 sl</Caption>
              <Caption $top="21.6%">#6392129 sell 1.00</Caption>
              <Quotes>
                {quotes.map(q => (
                  <Quote key={q.label} $h={q.h}>
                    {q.right ? <RightTerm>{q.label}</RightTerm> : <dt>{q.label}</dt>}
                    <Amount $color={q.color} $big={q.big}>{q.value}</Amount>
                  </Quote>
                ))}
              </Quotes>
              <Strengths>
                {strengths.map(s => (
                  <Strength key={s.name}>
                    <b>{s.name}</b>
                    {blockColors.slice(0, s.n).map((c, i) => (
                      <Block key={c} $color={c} $half={s.half && i === s.n - 1} />
                    ))}
                  </Strength>
                ))}
              </Strengths>
            </Plot>
            <Axis $top={26} $bottom={-3}>
              {prices.map(p => (
                <Price key={p} $now={p === '2014.82'}><span>{p}</span></Price>
              ))}
            </Axis>
          </Pane>
          <Pane $share={95}>
            <Plot>
              <HistogramPlot />
              <Caption $top="2px" $left={-1}>SS2009_B 0.303</Caption>
            </Plot>
            <LevelAxis>
              <Level $space={1}>2.594</Level>
              <Level $space={33}>0.00</Level>
              <Level $space={23}>-2.092</Level>
            </LevelAxis>
          </Pane>
          <Pane $share={164}>
            <Plot>
              <RsiPlot />
              <Caption $top="2px" $left={-1}>RSI(14) 73.4302</Caption>
            </Plot>
            <LevelAxis>
              <Level $space={1}>100</Level>
              <Level $space={31}>70</Level>
              <Level $space={52}>30</Level>
            </LevelAxis>
          </Pane>
          <TimeAxis>
            {times.map(t => <li key={t}>{t}</li>)}
          </TimeAxis>
        </ChartWindow>

        <TabBar>
          {tabs.map((t, i) => (
            <Tab key={t} $on={i === ACTIVE_TAB} $beforeOn={i === ACTIVE_TAB - 1}>{t}</Tab>
          ))}
          <TabScroll>
            <button aria-label="向左"><svg width="4" height="8"><path d="M4 1v6L0 4z" fill="#888" /></svg></button>
            <button aria-label="向右"><svg width="4" height="8"><path d="M0 1v6l4-3z" fill="#888" /></svg></button>
          </TabScroll>
        </TabBar>

        <PeriodMark />
        <Signature>
          <svg width="28" height="31" viewBox="0 0 28 31" aria-hidden="true">
            <path d="M8 0h11c6 0 8 2 8 8v11c0 5-2 8-7 8h-3l-3 4-1-4H8c-6 0-8-2-8-8V8c0-6 2-8 8-8z" fill="#fff" />
            <path d="M20 6c-4-1-6 0-6.500 4L12 26M7 14c4 1.500 7-1 12-1" fill="none" stroke="#000" strokeWidth="2.600" />
          </svg>
          @1天才交易者
        </Signature>
      </Terminal>
      <Backdrop>
        <BackdropDark />
        <BackdropLight />
        <CollapseButton aria-label="收起">
          <svg width="12" height="26" viewBox="0 0 12 26"><path d="M6 6L0 13l6 7" fill="none" stroke="#888" /></svg>
        </CollapseButton>
        <BackdropFoot />
      </Backdrop>
    </Screen>
  );
}
